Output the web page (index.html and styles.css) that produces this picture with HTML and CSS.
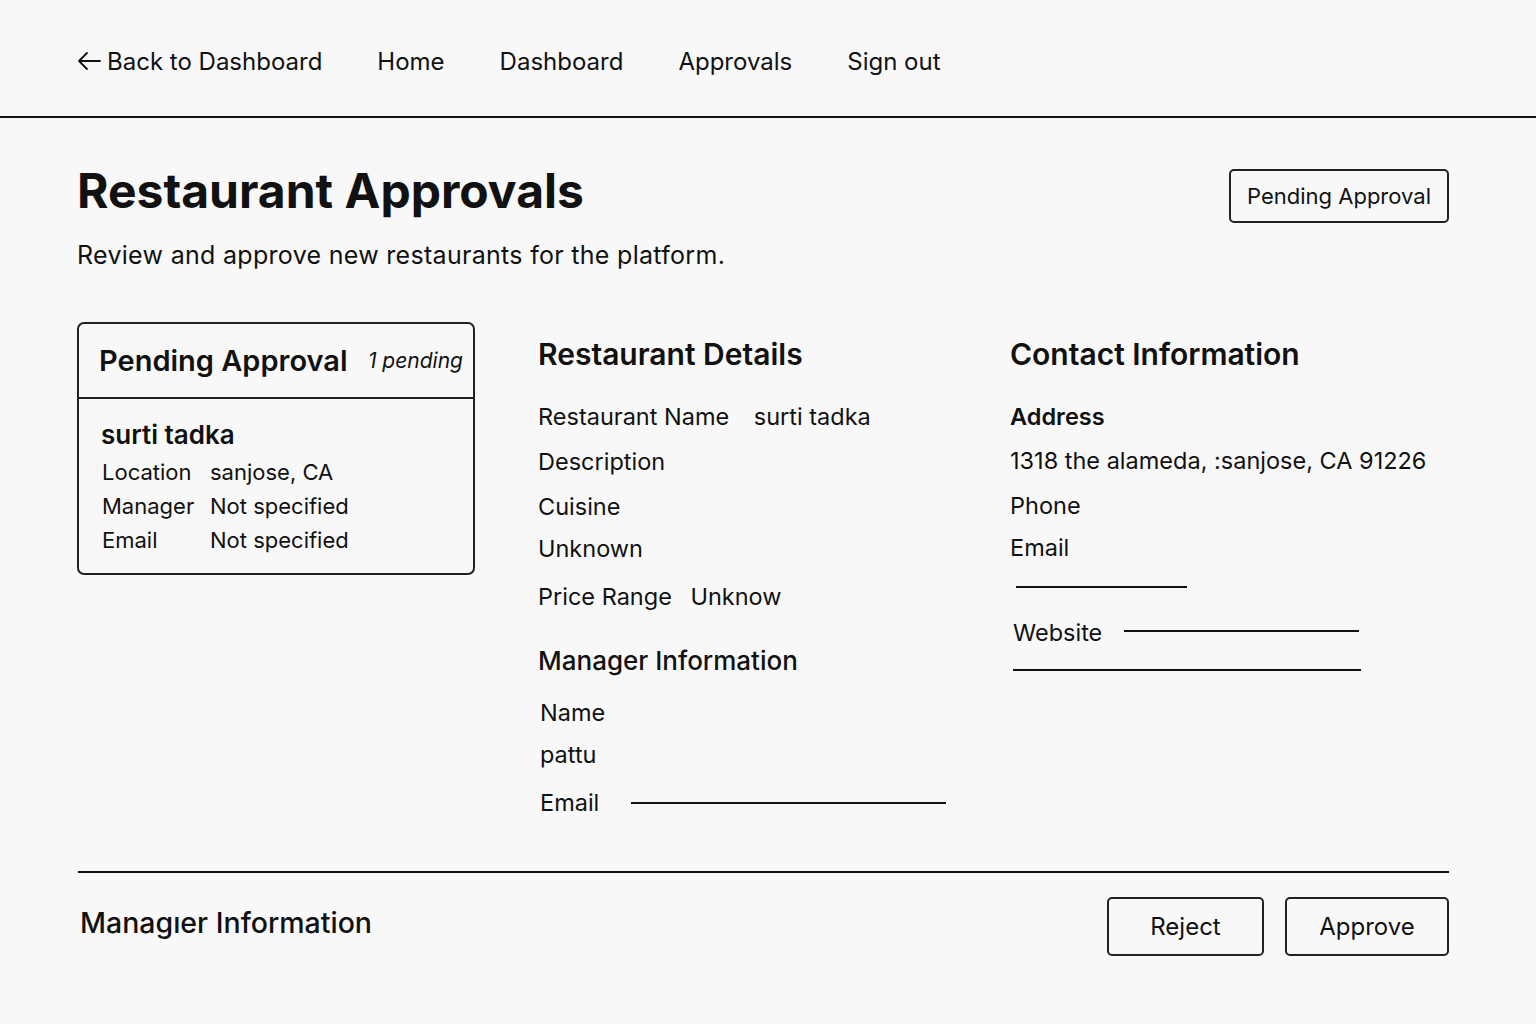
FILE: index.html
```html
<!DOCTYPE html>
<html lang="en">
<head>
<meta charset="utf-8">
<title>Restaurant Approvals</title>
<link rel="stylesheet" href="styles.css">
</head>
<body>
<nav class="nav">
  <a class="nav-link back"><svg class="arrow" width="24" height="20" viewBox="0 0 24 20"><path d="M23 10H2M10 2L2 10l8 8" fill="none" stroke="#111" stroke-width="1.8" stroke-linecap="round" stroke-linejoin="round"/></svg>Back to Dashboard</a>
  <a class="nav-link">Home</a>
  <a class="nav-link">Dashboard</a>
  <a class="nav-link">Approvals</a>
  <a class="nav-link">Sign out</a>
</nav>
<main class="main">
  <header class="title-row">
    <div>
      <h1 class="title">Restaurant Approvals</h1>
      <p class="subtitle">Review and approve new restaurants for the platform.</p>
    </div>
    <div class="status-btn">Pending Approval</div>
  </header>

  <section class="grid">
    <div class="card">
      <div class="card-head">
        <span class="card-title">Pending Approval</span>
        <span class="card-count">1 pending</span>
      </div>
      <div class="card-body">
        <div class="card-name">surti tadka</div>
        <div class="kv kv-first"><span class="k">Location</span><span>sanjose, CA</span></div>
        <div class="kv"><span class="k">Manager</span><span>Not specified</span></div>
        <div class="kv"><span class="k">Email</span><span>Not specified</span></div>
      </div>
    </div>

    <div class="col">
      <h2 class="col-title">Restaurant Details</h2>
      <div class="row r1">Restaurant Name <span class="val val-name">surti tadka</span></div>
      <div class="row r2">Description</div>
      <div class="row r2">Cuisine</div>
      <div class="row r3">Unknown</div>
      <div class="row r4">Price Range <span class="val val-price">Unknow</span></div>
      <h3 class="sub-title">Manager Information</h3>
      <div class="row r5 indent">Name</div>
      <div class="row r3 indent">pattu</div>
      <div class="row r4 indent line-row">Email <span class="fill-line mgr-line"></span></div>
    </div>

    <div class="col">
      <h2 class="col-title">Contact Information</h2>
      <div class="row r1 strong">Address</div>
      <div class="row r6">1318 the alameda, :sanjose, CA 91226</div>
      <div class="row r2">Phone</div>
      <div class="row r3">Email</div>
      <div class="rule rule-email"></div>
      <div class="row website line-row">Website <span class="fill-line web-line"></span></div>
      <div class="rule rule-web"></div>
    </div>
  </section>

  <footer class="footer">
    <div class="footer-title">Managıer Information</div>
    <div class="actions">
      <button class="btn btn-reject">Reject</button>
      <button class="btn btn-approve">Approve</button>
    </div>
  </footer>
</main>
</body>
</html>
```

FILE: styles.css
```css
* { box-sizing: border-box; }
html, body { margin: 0; padding: 0; }
body {
  background: #f8f8f8;
  color: #111;
  font-family: Inter, "Noto Sans", "Liberation Sans", sans-serif;
  width: 1536px;
  height: 1024px;
  overflow: hidden;
}
.nav {
  height: 118px;
  border-bottom: 2px solid #111;
  display: flex;
  align-items: center;
  gap: 55px;
  padding: 6px 0 0 77px;
}
.nav-link {
  font-size: 24px;
  color: #111;
  display: flex;
  align-items: center;
}
.arrow { margin-right: 6px; }
.main { padding: 44px 87px 0 77px; }
.title-row {
  display: flex;
  justify-content: space-between;
  align-items: flex-start;
}
.title {
  margin: 0;
  font-size: 48px;
  font-weight: 700;
  line-height: 58px;
}
.subtitle {
  margin: 20px 0 0;
  font-size: 25px;
  line-height: 30px;
  letter-spacing: 0.3px;
}
.status-btn {
  margin-top: 7px;
  border: 2px solid #222;
  border-radius: 5px;
  height: 54px;
  width: 220px;
  display: flex;
  align-items: center;
  justify-content: center;
  font-size: 22px;
}
.grid {
  display: grid;
  grid-template-columns: 461px 472px 1fr;
  margin-top: 52px;
}
.card {
  width: 398px;
  height: 253px;
  border: 2px solid #222;
  border-radius: 7px;
  align-self: start;
}
.card-head {
  height: 75px;
  border-bottom: 2px solid #222;
  display: flex;
  align-items: center;
  justify-content: space-between;
  padding: 0 10px 0 20px;
}
.card-title { font-size: 29px; font-weight: 600; }
.card-count { font-size: 21px; font-style: italic; }
.card-body { padding: 20px 0 0 23px; }
.card-name { font-size: 26px; font-weight: 600; line-height: 32px; margin-left: -1px; }
.kv { display: flex; font-size: 22px; line-height: 34px; }
.kv-first { margin-top: 4px; }
.k { width: 108px; }
.col { display: flex; flex-direction: column; }
.col-title {
  margin: 14px 0 0;
  font-size: 30px;
  font-weight: 600;
  line-height: 36px;
}
.row { font-size: 23.5px; line-height: 28px; }
.r1 { margin-top: 31px; }
.r2 { margin-top: 17px; }
.r3 { margin-top: 14px; }
.r4 { margin-top: 20px; }
.r5 { margin-top: 22px; }
.r6 { margin-top: 16px; }
.val-name { margin-left: 18px; }
.val-price { margin-left: 12px; }
.sub-title {
  margin: 34px 0 0;
  font-size: 26px;
  font-weight: 500;
  line-height: 32px;
}
.indent { padding-left: 2px; }
.strong { font-weight: 600; }
.line-row { display: flex; align-items: center; }
.fill-line { display: block; height: 2px; background: #111; }
.mgr-line { width: 315px; margin-left: 32px; }
.rule { height: 2px; background: #111; }
.rule-email { width: 171px; margin: 24px 0 0 6px; }
.website { margin-top: 31px; padding-left: 3px; }
.web-line { width: 235px; margin-left: 22px; margin-top: -4px; }
.rule-web { width: 348px; margin: 22px 0 0 3px; }
.footer {
  margin-top: 54px;
  border-top: 2px solid #111;
  margin-left: 1px;
  display: flex;
  justify-content: space-between;
  align-items: flex-start;
  padding-top: 24px;
}
.footer-title {
  font-size: 28.5px;
  font-weight: 500;
  margin: 9px 0 0 2px;
  line-height: 34px;
}
.actions { display: flex; gap: 21px; }
.btn {
  font-family: inherit;
  font-size: 24px;
  color: #111;
  background: transparent;
  border: 2px solid #222;
  border-radius: 5px;
  height: 59px;
}
.btn-reject { width: 157px; }
.btn-approve { width: 164px; }
```
